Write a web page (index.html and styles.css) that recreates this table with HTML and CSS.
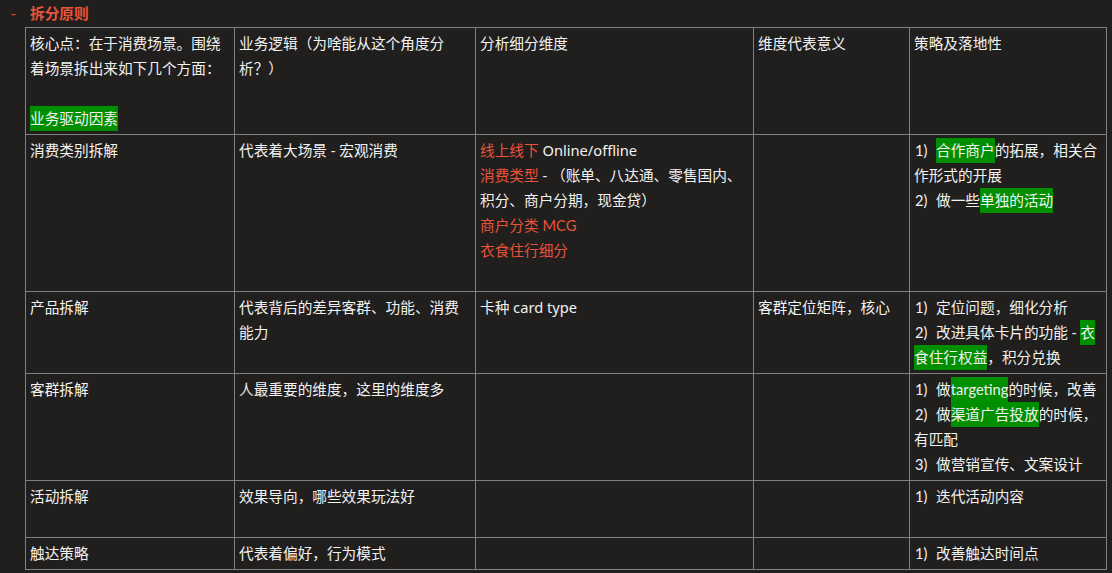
FILE: index.html
```html
<!DOCTYPE html>
<html lang="zh-CN">
<head>
<meta charset="utf-8">
<title>拆分原则</title>
<link rel="stylesheet" href="styles.css">
</head>
<body>
<div class="title"><span class="dash">-</span><span class="title-text">拆分原则</span></div>
<table class="grid">
  <colgroup>
    <col class="c1"><col class="c2"><col class="c3"><col class="c4"><col class="c5">
  </colgroup>
  <tr>
    <td>
      <div class="ln">核心点：在于消费场景。围绕着场景拆出来如下几个方面：</div>
      <div class="ln blank"></div>
      <div class="ln"><span class="hl">业务驱动因素</span></div>
    </td>
    <td><div class="ln">业务逻辑（为啥能从这个角度分析？）</div></td>
    <td><div class="ln">分析细分维度</div></td>
    <td><div class="ln">维度代表意义</div></td>
    <td><div class="ln">策略及落地性</div></td>
  </tr>
  <tr>
    <td><div class="ln">消费类别拆解</div></td>
    <td><div class="ln">代表着大场景 - 宏观消费</div></td>
    <td>
      <div class="ln"><span class="red">线上线下</span> Online/offline</div>
      <div class="ln"><span class="red">消费类型</span> - （账单、八达通、零售国内、<br>积分、商户分期，现金贷）</div>
      <div class="ln red">商户分类 <span class="lat">MCG</span></div>
      <div class="ln red">衣食住行细分</div>
      <div class="ln blank"></div>
    </td>
    <td></td>
    <td>
      <div class="ln"><span class="num">1)</span><span class="hl">合作商户</span>的拓展，相关合<br>作形式的开展</div>
      <div class="ln"><span class="num">2)</span>做一些<span class="hl">单独的活动</span></div>
    </td>
  </tr>
  <tr>
    <td><div class="ln">产品拆解</div></td>
    <td><div class="ln">代表背后的差异客群、功能、消费能力</div></td>
    <td><div class="ln">卡种 card type</div></td>
    <td><div class="ln">客群定位矩阵，核心</div></td>
    <td>
      <div class="ln"><span class="num">1)</span>定位问题，细化分析</div>
      <div class="ln"><span class="num">2)</span>改进具体卡片的功能 - <span class="hl">衣</span><br><span class="hl">食住行权益</span>，积分兑换</div>
    </td>
  </tr>
  <tr>
    <td><div class="ln">客群拆解</div></td>
    <td><div class="ln">人最重要的维度，这里的维度多</div></td>
    <td></td>
    <td></td>
    <td>
      <div class="ln"><span class="num">1)</span>做<span class="hl lat">targeting</span>的时候，改善</div>
      <div class="ln"><span class="num">2)</span>做<span class="hl">渠道广告投放</span>的时候，<br>有匹配</div>
      <div class="ln"><span class="num">3)</span>做营销宣传、文案设计</div>
    </td>
  </tr>
  <tr>
    <td><div class="ln">活动拆解</div></td>
    <td><div class="ln">效果导向，哪些效果玩法好</div></td>
    <td></td>
    <td></td>
    <td>
      <div class="ln"><span class="num">1)</span>迭代活动内容</div>
      <div class="ln blank"></div>
    </td>
  </tr>
  <tr>
    <td><div class="ln">触达策略</div></td>
    <td><div class="ln">代表着偏好，行为模式</div></td>
    <td></td>
    <td></td>
    <td><div class="ln"><span class="num">1)</span>改善触达时间点</div></td>
  </tr>
</table>
</body>
</html>
```

FILE: styles.css
```css
html, body {
  margin: 0;
  padding: 0;
  background: #201f1e;
}
body {
  color: #f2f2f2;
  font-family: "Noto Sans", "Noto Sans CJK SC", sans-serif;
  font-size: 14.67px;
  line-height: 25px;
}
.title {
  display: flex;
  padding: 1px 0 1px 0;
  height: 25px;
  color: #e8533a;
  font-weight: bold;
}
.dash {
  width: 19px;
  margin-left: 11px;
  font-weight: normal;
}
.grid {
  margin-left: 25px;
  border-collapse: collapse;
  table-layout: fixed;
  width: 1082px;
}
.c1 { width: 209px; }
.c2 { width: 241px; }
.c3 { width: 278px; }
.c4 { width: 156px; }
.c5 { width: 197px; }
.grid td {
  border: 1px solid #808080;
  padding: 3px 3px 3px 4px;
  vertical-align: top;
}
.ln {
  min-height: 25px;
}
.num {
  display: inline-block;
  width: 22px;
  padding-left: 1px;
  box-sizing: border-box;
  font-family: "Lato", sans-serif;
}
.red {
  color: #e8533a;
}
.hl {
  display: inline-block;
  background: #008f00;
  line-height: 25px;
  vertical-align: top;
}
.lat {
  font-family: "Lato", "Noto Sans CJK SC", sans-serif;
}
```
